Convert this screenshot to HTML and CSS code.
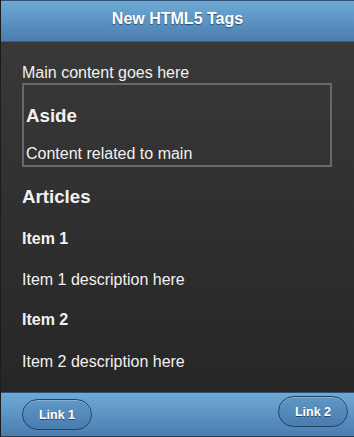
FILE: index.html
```html
<!DOCTYPE html>
<html>
<head>
<meta charset="utf-8">
<title>New HTML5 Tags</title>
<link rel="stylesheet" href="styles.css">
</head>
<body>
<div class="page">
  <header class="bar header">
    <h1 class="title">New HTML5 Tags</h1>
  </header>
  <div class="content">
    <div class="main-text">Main content goes here</div>
    <aside class="aside">
      <h3 class="aside-title">Aside</h3>
      <p class="aside-text">Content related to main</p>
    </aside>
    <section class="articles">
      <h3 class="section-title">Articles</h3>
      <article>
        <h4 class="item-title">Item 1</h4>
        <p class="item-text">Item 1 description here</p>
      </article>
      <article>
        <h4 class="item-title">Item 2</h4>
        <p class="item-text">Item 2 description here</p>
      </article>
    </section>
  </div>
  <footer class="bar footer">
    <a class="btn btn-left">Link 1</a>
    <a class="btn btn-right">Link 2</a>
  </footer>
</div>
</body>
</html>
```

FILE: styles.css
```css
html, body {
  margin: 0;
  padding: 0;
  height: 100%;
}
body {
  font-family: "Liberation Sans", Arial, sans-serif;
  color: #f2f2f0;
  background: linear-gradient(#3b3b3b, #242424);
}
.page {
  min-height: 100vh;
  display: flex;
  flex-direction: column;
  border-left: 1px solid #1c1c1c;
  box-sizing: border-box;
}
.bar {
  background: linear-gradient(#6eaad5, #4a7db0);
  border-top: 1px solid #2d4f72;
}
.header {
  height: 42px;
  box-sizing: border-box;
  border-bottom: 1px solid #3a5f86;
}
.title {
  margin: 0;
  padding-top: 9px;
  text-align: center;
  font-size: 16px;
  font-weight: bold;
  line-height: 18px;
  color: #fff;
  text-shadow: 0 1px 1px #2b4d70;
}
.content {
  flex: 1;
  padding: 22px 22px 0 21px;
}
.main-text {
  font-size: 16px;
}
.aside {
  height: 84px;
  box-sizing: border-box;
  border: 2px solid #686868;
  padding: 0 2px;
  margin-top: 1px;
}
.aside-title {
  margin: 20px 0 18px;
  font-size: 18.72px;
}
.aside-text {
  margin: 0;
  font-size: 16px;
}
.section-title {
  margin: 18.72px 0;
  font-size: 18.72px;
}
.item-title {
  margin: 22px 0 23.5px;
  font-size: 16px;
}
.item-text {
  margin: 16px 0;
  font-size: 16px;
}
.footer {
  height: 45px;
  box-sizing: border-box;
  display: flex;
  justify-content: space-between;
  align-items: flex-start;
  padding: 0 6px 0 21px;
  border-top: 1px solid #2f4f70;
  border-bottom: 1px solid #2a3c50;
}
.btn {
  width: 70px;
  height: 31px;
  box-sizing: border-box;
  border: 1px solid #23415f;
  border-radius: 16px;
  background: linear-gradient(#5f97c6, #4a7cae);
  box-shadow: inset 0 1px 0 rgba(255,255,255,0.25);
  color: #fff;
  font-size: 12.5px;
  font-weight: bold;
  display: flex;
  align-items: center;
  justify-content: center;
  text-shadow: 0 1px 0 #244a70;
}
.btn-left {
  margin-top: 6px;
}
.btn-right {
  margin-top: 3px;
}
```
